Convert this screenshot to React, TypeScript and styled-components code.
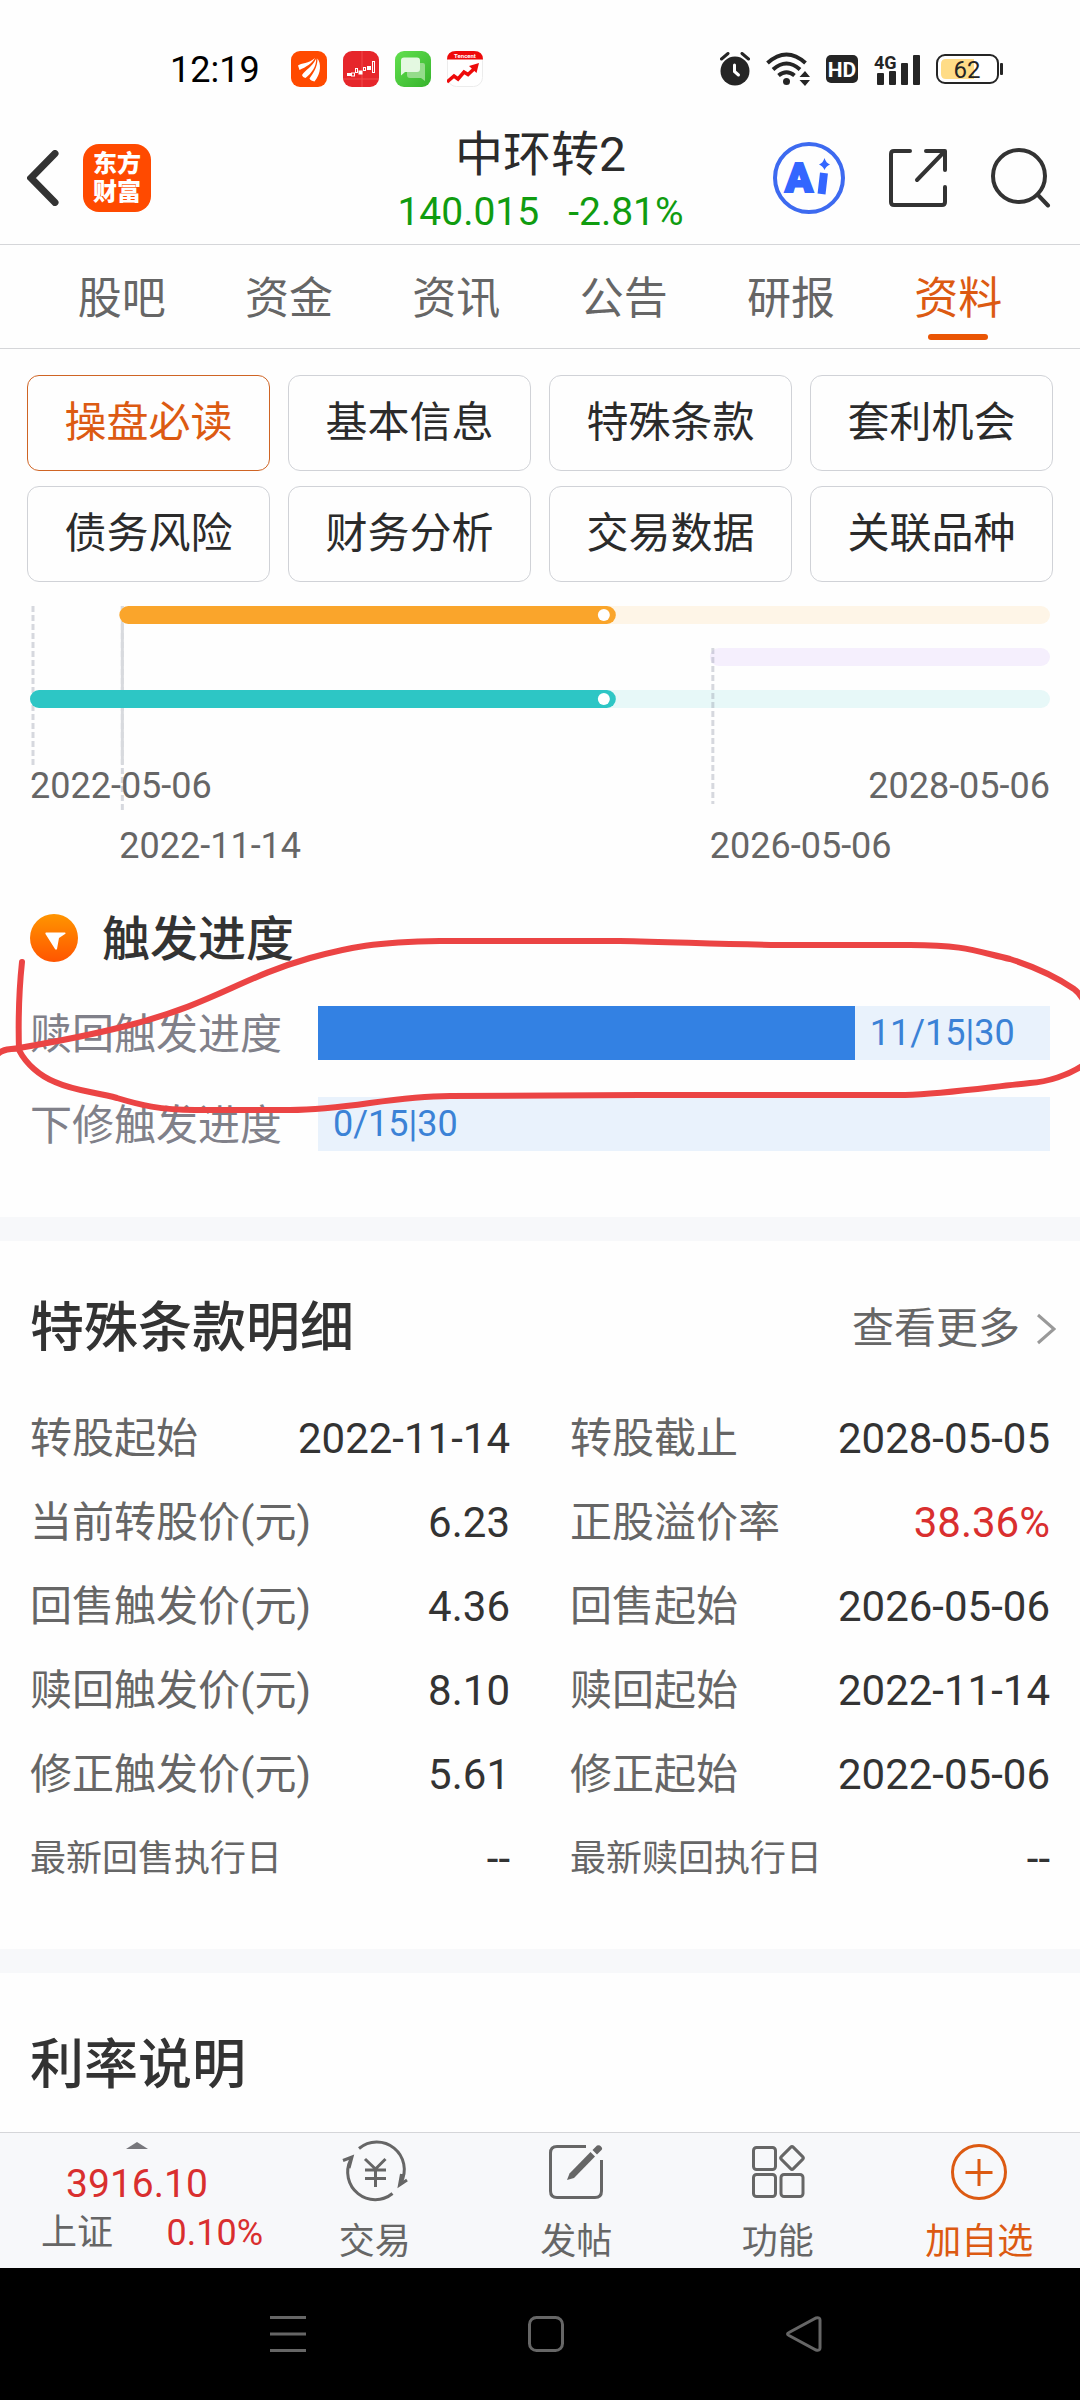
import React from "react";
import styled, { createGlobalStyle } from "styled-components";

const color = {
  ink: "#2b2b2b",
  heading: "#333333",
  muted: "#666666",
  accent: "#dc5a12",
  line: "#d5d6d9",
  band: "#f7f8fa",
  rise: "#d92f2f",
  fall: "#109c10",
  blue: "#3381e3",
};

const GlobalStyle = createGlobalStyle`
  * { box-sizing: border-box; }
  body { margin: 0; background: #fefefe; }
  body, button {
    font-family: Roboto, "Noto Sans CJK SC", "Noto Sans", sans-serif;
  }
  button {
    margin: 0;
    padding: 0;
    border: 0;
    background: none;
    color: inherit;
    cursor: pointer;
  }
  svg { display: block; flex: none; }
  h1, h2, h3, p, dl, dd { margin: 0; }
`;

const Page = styled.div`
  min-height: 100vh;
  display: flex;
  flex-direction: column;
  background: #fefefe;
  color: ${color.ink};
`;

/* ---------- status bar ---------- */

const StatusBar = styled.div`
  height: 100px;
  padding: 38px 77px 0 170px;
  display: flex;
  align-items: center;
  justify-content: space-between;
`;

const StatusGroup = styled.div`
  display: flex;
  align-items: center;
  gap: 16px;
`;

const Clock = styled.time`
  margin-right: 15px;
  padding-top: 2px;
  font-size: 36px;
  line-height: 42px;
  color: #000;
`;

/* ---------- title bar ---------- */

const TitleBar = styled.header`
  display: grid;
  grid-template-columns: 1fr auto 1fr;
  align-items: center;
  height: 145px;
  padding: 11px 29px 0 27px;
  border-bottom: 1px solid ${color.line};
`;

const TitleSide = styled.div<{ $end?: boolean }>`
  display: flex;
  align-items: center;
  justify-content: ${(p) => (p.$end ? "flex-end" : "flex-start")};
  gap: ${(p) => (p.$end ? 44 : 24)}px;
`;

const BrandButton = styled.button`
  width: 68px;
  height: 68px;
  border-radius: 16px;
  background: #ff4a00;
  color: #fff;
  font-size: 24px;
  line-height: 28px;
  font-weight: 900;
`;

const TitleText = styled.div`
  padding: 8px 0 0 3px;
  text-align: center;
`;

const BondName = styled.h1`
  font-size: 48px;
  line-height: 60px;
  font-weight: 400;
`;

const BondQuote = styled.p`
  display: flex;
  justify-content: center;
  gap: 29px;
  font-size: 39px;
  line-height: 54px;
  color: ${color.fall};
`;

/* ---------- tabs and chips ---------- */

const Tabs = styled.nav`
  display: flex;
  height: 104px;
  padding: 0 38px;
  border-bottom: 1px solid ${color.line};
`;

const Tab = styled.button<{ $active?: boolean }>`
  position: relative;
  flex: 1;
  padding-top: 5px;
  font-size: 44px;
  line-height: 60px;
  color: ${(p) => (p.$active ? color.accent : color.muted)};

  &::after {
    content: "";
    display: ${(p) => (p.$active ? "block" : "none")};
    position: absolute;
    left: 50%;
    bottom: 8px;
    width: 60px;
    height: 6px;
    margin-left: -30px;
    border-radius: 3px;
    background: #ea5504;
  }
`;

const Main = styled.main`
  flex: 1;
`;

const Chips = styled.div`
  display: grid;
  grid-template-columns: repeat(4, 1fr);
  gap: 15px 18px;
  padding: 26px 27px 0;
`;

const Chip = styled.button<{ $active?: boolean }>`
  height: 96px;
  border: 1px solid ${(p) => (p.$active ? "#cf6424" : "#d0d2d7")};
  border-radius: 12px;
  font-size: 42px;
  line-height: 60px;
  color: ${(p) => (p.$active ? color.accent : color.ink)};
`;

/* ---------- timeline ---------- */

const Timeline = styled.section`
  display: grid;
  margin: 24px 30px 0;
`;

const TimelineChart = styled.svg`
  grid-area: 1 / 1;
  width: 100%;
  height: 204px;
`;

const TimelineLabels = styled.div`
  grid-area: 1 / 1;
  display: grid;
  gap: 18px;
  padding-top: 159px;
  font-size: 36px;
  line-height: 42px;
  color: ${color.muted};
`;

const EndLabels = styled.div`
  display: flex;
  justify-content: space-between;
`;

const MiddleLabels = styled.div`
  display: grid;
`;

/* ---------- trigger progress ---------- */

const TriggerSection = styled.section`
  position: relative;
  padding: 47px 30px 66px;
`;

const TriggerHeading = styled.div`
  display: flex;
  align-items: center;
  gap: 24px;
  height: 48px;
  margin-bottom: 44px;
`;

const TriggerTitle = styled.h2`
  padding-top: 4px;
  font-size: 48px;
  line-height: 60px;
  font-weight: 500;
  color: ${color.heading};
`;

const TriggerRows = styled.div`
  display: grid;
  gap: 37px;
`;

const TriggerRow = styled.div`
  display: flex;
  align-items: center;
  gap: 36px;
  height: 54px;
`;

const TriggerLabel = styled.span`
  padding-top: 4px;
  font-size: 42px;
  line-height: 54px;
  color: #808089;
`;

const TriggerTrack = styled.div`
  flex: 1;
  display: flex;
  height: 54px;
  background: #e9f2fc;
`;

const TriggerFill = styled.div`
  background: ${color.blue};
`;

const TriggerValue = styled.span`
  padding-left: 15px;
  font-size: 36px;
  line-height: 54px;
  color: #3b82d6;
`;

const Annotation = styled.svg`
  position: absolute;
  left: 0;
  top: 0;
  width: 100%;
  height: 100%;
  pointer-events: none;
`;

/* ---------- detail sections ---------- */

const Band = styled.div`
  height: 24px;
  background: ${color.band};
`;

const Section = styled.section`
  padding: 58px 30px 48px;
`;

const RateSection = styled.section`
  padding: 63px 30px 36px;
`;

const SectionHead = styled.div`
  display: flex;
  align-items: center;
  justify-content: space-between;
`;

const SectionTitle = styled.h2`
  font-size: 54px;
  line-height: 60px;
  font-weight: 500;
  color: ${color.heading};
`;

const MoreButton = styled.button`
  display: flex;
  align-items: center;
  gap: 16px;
  margin-right: -6px;
  font-size: 42px;
  line-height: 60px;
  color: ${color.muted};
`;

const TermGrid = styled.dl`
  display: grid;
  grid-template-columns: 1fr 1fr;
  column-gap: 60px;
  margin-top: 38px;
`;

const TermRow = styled.div`
  display: flex;
  align-items: center;
  justify-content: space-between;
  height: 84px;
`;

const TermName = styled.dt<{ $small?: boolean }>`
  font-size: ${(p) => (p.$small ? 36 : 42)}px;
  line-height: 60px;
  color: ${color.muted};
`;

const TermValue = styled.dd<{ $rise?: boolean }>`
  font-size: 42px;
  line-height: 60px;
  color: ${(p) => (p.$rise ? color.rise : color.heading)};
`;

/* ---------- bottom bars ---------- */

const BottomBar = styled.footer`
  display: flex;
  height: 136px;
  border-top: 1px solid ${color.line};
  background: #f7f8fa;
`;

const IndexButton = styled.button`
  display: flex;
  flex-direction: column;
  align-items: center;
  width: 274px;
  padding-top: 9px;
  color: ${color.rise};
`;

const IndexValue = styled.span`
  margin-top: 13px;
  font-size: 39px;
  line-height: 44px;
`;

const IndexRow = styled.span`
  display: flex;
  justify-content: space-between;
  width: 100%;
  padding: 6px 11px 0 41px;
  font-size: 36px;
  line-height: 42px;
`;

const IndexName = styled.span`
  color: ${color.muted};
`;

const ActionButton = styled.button<{ $accent?: boolean }>`
  flex: 1;
  display: flex;
  flex-direction: column;
  align-items: center;
  gap: 17px;
  padding-top: 7px;
  font-size: 36px;
  line-height: 42px;
  color: ${(p) => (p.$accent ? color.accent : color.muted)};
`;

const SystemNav = styled.nav`
  display: flex;
  justify-content: center;
  align-items: center;
  gap: 222px;
  height: 132px;
  padding-left: 12px;
  background: #000;
`;

/* ---------- icons ---------- */

const FanAppIcon = () => (
  <svg width="36" height="36" viewBox="0 0 36 36">
    <rect width="36" height="36" rx="9" fill="#ff4a00" />
    <g fill="#fff">
      <path d="M7 14.5C10 12 18 12.5 24 7C21 12.500 15 16 8.500 19Z" />
      <path d="M11 24C15 18.500 21 16 25.200 7.500C25.500 15 21 22 14.500 27C12.500 26.500 11.500 25.500 11 24Z" />
      <path d="M18.500 27.500C22 22 26.500 17 26.500 7.500C30 12 30.500 22 23.500 30.500C21 30 19.500 29.500 18.500 27.500Z" />
    </g>
  </svg>
);

const CandleAppIcon = () => (
  <svg width="36" height="36" viewBox="0 0 36 36">
    <rect width="36" height="36" rx="9" fill="#e6262b" />
    <path d="M19 0V36M0 28H36" stroke="#f04a4d" />
    <g stroke="#fff" fill="none">
      <rect x="4.500" y="22.500" width="3" height="2" fill="#fff" />
      <rect x="8.500" y="22" width="3" height="3" />
      <rect x="12.500" y="17.500" width="2" height="4" />
      <rect x="16" y="20" width="3" height="3" fill="#fff" />
      <rect x="20.500" y="16.500" width="2" height="3" />
      <rect x="24.500" y="15.500" width="3" height="3" fill="#fff" />
      <rect x="29.500" y="10.500" width="2" height="11" />
    </g>
  </svg>
);

const ChatAppIcon = () => (
  <svg width="36" height="36" viewBox="0 0 36 36">
    <defs>
      <linearGradient id="chat-bg" x1="0" y1="0" x2="1" y2="1">
        <stop offset="0" stopColor="#62e04f" />
        <stop offset="1" stopColor="#36b32c" />
      </linearGradient>
    </defs>
    <rect width="36" height="36" rx="9" fill="url(#chat-bg)" />
    <path d="M15 12H28Q30 12 30 14V30L26 27H15Q12 27 12 24V15Q12 12 15 12Z" fill="#95dc8b" />
    <path d="M9 6.500H22Q25 6.500 25 9.500V18Q25 21 22 21H10L6 24.500V9.500Q6 6.500 9 6.500Z" fill="#e4f8e1" />
  </svg>
);

const StockAppIcon = () => (
  <svg width="36" height="36" viewBox="0 0 36 36">
    <rect x="0.500" y="0.500" width="35" height="35" rx="9" fill="#fff" stroke="#ececec" />
    <path d="M0 8.500Q0 0 9 0H27Q36 0 36 8.500Z" fill="#ee0a0a" />
    <text x="18" y="6.500" fontSize="6" fontWeight="700" fill="#fff" textAnchor="middle" fontFamily="Roboto, sans-serif">
      Tencent
    </text>
    <path d="M0 31L7 25L11 28L17 21L21 23.500L28 17" fill="none" stroke="#ee0a0a" strokeWidth="3.500" />
    <path d="M22 15L32 12L29.500 22Z" fill="#ee0a0a" />
  </svg>
);

const AlarmIcon = () => (
  <svg width="30" height="34" viewBox="0 0 30 34">
    <circle cx="15" cy="19" r="14.500" fill="#252525" />
    <path d="M1.500 7L8 1.500M28.500 7L22 1.500" stroke="#252525" strokeWidth="3" strokeLinecap="round" />
    <path d="M14.500 13V19.500L18.500 23" stroke="#fff" strokeWidth="3" fill="none" strokeLinecap="round" />
  </svg>
);

const WifiIcon = () => (
  <svg width="44" height="34" viewBox="0 0 44 34">
    <g fill="none" stroke="#252525" strokeWidth="4">
      <path d="M1.500 11Q20.500 -6 39.500 11" />
      <path d="M7 17.500Q20.500 5.500 34 17.500" />
      <path d="M12.500 23.500Q20.500 17 28.500 23.500" />
    </g>
    <circle cx="20.500" cy="29.500" r="3.500" fill="#252525" />
    <path d="M33.500 25L39 19L44 25ZM33.500 28L39 34L44 28Z" fill="#252525" />
  </svg>
);

const HdIcon = () => (
  <svg width="32" height="28" viewBox="0 0 32 28">
    <rect width="32" height="28" rx="5" fill="#252525" />
    <text x="16" y="22" fontSize="21" fontWeight="700" fill="#fff" textAnchor="middle" fontFamily="Roboto, sans-serif">
      HD
    </text>
  </svg>
);

const SignalIcon = () => (
  <svg width="46" height="38" viewBox="0 -4 46 38" overflow="visible">
    <text x="0" y="15" fontSize="18" fontWeight="700" fill="#252525" fontFamily="Roboto, sans-serif">
      4G
    </text>
    <g fill="#252525">
      <rect x="3" y="19" width="7" height="12" rx="1" />
      <rect x="15" y="17" width="7" height="14" rx="1" />
      <rect x="27" y="9" width="7" height="22" rx="1" />
      <rect x="39" y="1" width="7" height="30" rx="1" />
    </g>
  </svg>
);

const BatteryIcon = () => (
  <svg width="67" height="30" viewBox="0 0 67 30">
    <rect x="1" y="1" width="61" height="28" rx="8" fill="#fff" stroke="#252525" strokeWidth="2" />
    <path d="M10 5H38V25H10Q5 25 5 20V10Q5 5 10 5Z" fill="#ffdc87" />
    <rect x="64" y="9" width="3" height="12" rx="1" fill="#252525" />
    <text x="31" y="24" fontSize="24" fill="#252525" textAnchor="middle" fontFamily="Roboto, sans-serif">
      62
    </text>
  </svg>
);

const BackIcon = () => (
  <svg width="32" height="56" viewBox="0 0 32 56">
    <path d="M28 3.500L4 28L28 52.500" fill="none" stroke="#333" strokeWidth="7" strokeLinecap="round" />
  </svg>
);

const AiIcon = () => (
  <svg width="72" height="72" viewBox="0 0 72 72">
    <circle cx="36" cy="36" r="34" fill="none" stroke="#3d6af0" strokeWidth="4" />
    <text x="12" y="50" fontSize="41" fontWeight="900" fill="#3366ff" stroke="#3366ff" strokeWidth="2" fontFamily="Roboto, sans-serif">
      A
    </text>
    <path d="M50.500 35L49 48" stroke="#3366ff" strokeWidth="8" strokeLinecap="square" />
    <path d="M51.500 16Q53 21 57 22.500Q53 24 51.500 28Q50 24 46 22.500Q50 21 51.500 16Z" fill="#3366ff" />
  </svg>
);

const ShareIcon = () => (
  <svg width="58" height="58" viewBox="0 0 58 58">
    <g fill="none" stroke="#333" strokeWidth="4" strokeLinecap="round" strokeLinejoin="round">
      <path d="M21 2H5Q2 2 2 5V53Q2 56 5 56H53Q56 56 56 53V38" />
      <path d="M37 2H56V21M55 3L28 31" />
    </g>
  </svg>
);

const SearchIcon = () => (
  <svg width="60" height="60" viewBox="0 0 60 60">
    <g fill="none" stroke="#333" strokeWidth="4" strokeLinecap="round">
      <circle cx="28" cy="28" r="26" />
      <path d="M46.500 46.500L57 57.500" />
    </g>
  </svg>
);

const TriggerIcon = () => (
  <svg width="48" height="48" viewBox="0 0 48 48">
    <defs>
      <linearGradient id="trigger-bg" x1="0" y1="0" x2="0" y2="1">
        <stop offset="0" stopColor="#ff9500" />
        <stop offset="1" stopColor="#ff5500" />
      </linearGradient>
    </defs>
    <circle cx="24" cy="24" r="24" fill="url(#trigger-bg)" />
    <path d="M16 18.500H35Q36.500 19 35 20L29 24L27 35Q26 36.500 25 35L15.500 20Q15 18.500 16 18.500Z" fill="#fff" />
  </svg>
);

const MoreIcon = () => (
  <svg width="20" height="32" viewBox="0 0 20 32">
    <path d="M2 2L18 16L2 30" fill="none" stroke="#999" strokeWidth="3" />
  </svg>
);

const UpTriangle = () => (
  <svg width="22" height="7" viewBox="0 0 22 7">
    <path d="M0 7L11 0L22 7Z" fill="#77777c" />
  </svg>
);

const TradeIcon = () => (
  <svg width="66" height="64" viewBox="0 0 66 64">
    <g fill="none" stroke="#666" strokeWidth="3">
      <path d="M17 8.500A27.500 27.500 0 0 1 59 42.500M65 40L57.500 45L59.500 34" />
      <path d="M50.500 53.500A27.500 27.500 0 0 1 8.500 20M1 20.500L10 17L7 28" />
      <path d="M23 19L33.500 29L43.500 19M23 30H44M23 38.500H44M33.500 29V47" />
    </g>
  </svg>
);

const PostIcon = () => (
  <svg width="56" height="64" viewBox="0 0 56 64">
    <path d="M38 6.500H9Q2.500 6.500 2.500 13V51Q2.500 57.500 9 57.500H47Q53.500 57.500 53.500 51V20" fill="none" stroke="#666" strokeWidth="3" />
    <path d="M19 40L21.500 33.500L42.500 12L47 16.500L26 38Z" fill="#666" />
    <path d="M44.500 10L49 5.500Q51.500 4.500 53 6.500Q55 8.500 53.500 10L49 14.500Z" fill="#666" />
  </svg>
);

const FeatureIcon = () => (
  <svg width="54" height="64" viewBox="0 0 54 64">
    <g fill="none" stroke="#666" strokeWidth="3">
      <rect x="2.500" y="7.500" width="22" height="22" rx="3" />
      <rect x="2.500" y="34.500" width="22" height="22" rx="3" />
      <rect x="30" y="34.500" width="22" height="22" rx="3" />
      <rect x="32.500" y="9.500" width="17" height="17" rx="2" transform="rotate(45 41 18)" />
    </g>
  </svg>
);

const AddIcon = () => (
  <svg width="58" height="64" viewBox="0 0 58 64">
    <g fill="none" stroke={color.accent} strokeWidth="3">
      <circle cx="29" cy="32" r="26.500" />
      <path d="M29 19V46M15.500 32.500H42.500" />
    </g>
  </svg>
);

/* ---------- data ---------- */

const tabs = ["股吧", "资金", "资讯", "公告", "研报", "资料"];

const chips = [
  "操盘必读",
  "基本信息",
  "特殊条款",
  "套利机会",
  "债务风险",
  "财务分析",
  "交易数据",
  "关联品种",
];

const term = { start: "2022-05-06", convert: "2022-11-14", putBack: "2026-05-06", end: "2028-05-06" };
const today = "2025-10-16";

const share = (day: string) =>
  ((Date.parse(day) - Date.parse(term.start)) / (Date.parse(term.end) - Date.parse(term.start))) * 100;

const spans = [
  { from: term.convert, y: 0, tint: "#fef5e7", fill: "#faa52b" },
  { from: term.putBack, y: 42, tint: "#f5effd", fill: "" },
  { from: term.start, y: 84, tint: "#e7f8f8", fill: "#2dc6c5" },
];

const triggers = [
  { label: "赎回触发进度", done: 11, need: 15, window: 30 },
  { label: "下修触发进度", done: 0, need: 15, window: 30 },
];

const terms = [
  { name: "转股起始", value: "2022-11-14" },
  { name: "转股截止", value: "2028-05-05" },
  { name: "当前转股价(元)", value: "6.23" },
  { name: "正股溢价率", value: "38.36%", rise: true },
  { name: "回售触发价(元)", value: "4.36" },
  { name: "回售起始", value: "2026-05-06" },
  { name: "赎回触发价(元)", value: "8.10" },
  { name: "赎回起始", value: "2022-11-14" },
  { name: "修正触发价(元)", value: "5.61" },
  { name: "修正起始", value: "2022-05-06" },
  { name: "最新回售执行日", value: "--", small: true },
  { name: "最新赎回执行日", value: "--", small: true },
];

/* ---------- parts ---------- */

const TermTimeline = () => {
  const now = share(today);
  const guides = [
    { at: share(term.start), top: 0, bottom: 162, under: true },
    { at: share(term.convert), top: 0, bottom: 204, under: true },
    { at: share(term.putBack), top: 42, bottom: 198, under: false },
  ];
  const guideLine = (g: (typeof guides)[number]) => (
    <svg key={g.at} x={`${g.at}%`} overflow="visible">
      <line x1="3" x2="3" y1={g.top} y2={g.bottom} stroke="#8a8fa0" strokeOpacity="0.34" strokeWidth="3" strokeDasharray="6 3" />
    </svg>
  );
  return (
    <Timeline>
      <TimelineChart aria-hidden="true">
        {guides.filter((g) => g.under).map(guideLine)}
        <svg x={`${share(term.convert)}%`} overflow="visible">
          <line x1="3" x2="3" y1="0" y2="158" stroke="#d8dade" strokeWidth="3" />
        </svg>
        {spans.map((s) => (
          <g key={s.y}>
            <rect x={`${share(s.from)}%`} y={s.y} width={`${100 - share(s.from)}%`} height="18" rx="9" fill={s.tint} />
            {s.fill && (
              <>
                <rect x={`${share(s.from)}%`} y={s.y} width={`${now - share(s.from)}%`} height="18" rx="9" fill={s.fill} />
                <svg x={`${now}%`} overflow="visible">
                  <circle cx="-12" cy={s.y + 9} r="6" fill="#fff" />
                </svg>
              </>
            )}
          </g>
        ))}
        {guides.filter((g) => !g.under).map(guideLine)}
      </TimelineChart>
      <TimelineLabels>
        <EndLabels>
          <span>{term.start}</span>
          <span>{term.end}</span>
        </EndLabels>
        <MiddleLabels
          style={{
            gridTemplateColumns: `${share(term.convert)}% ${share(term.putBack) - share(term.convert)}% 1fr`,
          }}
        >
          <span />
          <span>{term.convert}</span>
          <span>{term.putBack}</span>
        </MiddleLabels>
      </TimelineLabels>
    </Timeline>
  );
};

const TriggerProgress = () => (
  <TriggerSection>
    <TriggerHeading>
      <TriggerIcon />
      <TriggerTitle>触发进度</TriggerTitle>
    </TriggerHeading>
    <TriggerRows>
      {triggers.map((t) => (
        <TriggerRow key={t.label}>
          <TriggerLabel>{t.label}</TriggerLabel>
          <TriggerTrack>
            <TriggerFill style={{ width: `${(t.done / t.need) * 100}%` }} />
            <TriggerValue>{`${t.done}/${t.need}|${t.window}`}</TriggerValue>
          </TriggerTrack>
        </TriggerRow>
      ))}
    </TriggerRows>
    <Annotation viewBox="0 867 1080 350" preserveAspectRatio="none" aria-hidden="true">
      <g fill="none" stroke="#eb4444" strokeWidth="6" strokeLinecap="round" strokeLinejoin="round">
        <path d="M22 962C19 990 18 1015 19 1050C26 1064 40 1076 55 1082C75 1091 95 1092 117 1098C140 1105 160 1110 195 1110H290C350 1110 390 1096 450 1096C500 1096 560 1095 640 1095H905C945 1094 990 1087 1030 1083C1048 1082 1068 1075 1082 1066" />
        <path d="M-2 1054C4 1048 10 1050 19 1048C60 1041 95 1034 130 1025C215 1003 240 978 310 958C350 947 375 942 440 941H620C680 942 730 945 795 945H910C965 945 975 951 1010 959C1035 967 1055 976 1074 989Q1079 993 1082 998" />
      </g>
    </Annotation>
  </TriggerSection>
);

export default function App() {
  return (
    <>
      <GlobalStyle />
      <Page>
        <StatusBar>
          <StatusGroup>
            <Clock>12:19</Clock>
            <FanAppIcon />
            <CandleAppIcon />
            <ChatAppIcon />
            <StockAppIcon />
          </StatusGroup>
          <StatusGroup>
            <AlarmIcon />
            <WifiIcon />
            <HdIcon />
            <SignalIcon />
            <BatteryIcon />
          </StatusGroup>
        </StatusBar>

        <TitleBar>
          <TitleSide>
            <button aria-label="返回">
              <BackIcon />
            </button>
            <BrandButton>
              东方
              <br />
              财富
            </BrandButton>
          </TitleSide>
          <TitleText>
            <BondName>中环转2</BondName>
            <BondQuote>
              <span>140.015</span>
              <span>-2.81%</span>
            </BondQuote>
          </TitleText>
          <TitleSide $end>
            <button aria-label="Ai">
              <AiIcon />
            </button>
            <button aria-label="分享">
              <ShareIcon />
            </button>
            <button aria-label="搜索">
              <SearchIcon />
            </button>
          </TitleSide>
        </TitleBar>

        <Tabs>
          {tabs.map((t) => (
            <Tab key={t} $active={t === "资料"}>
              {t}
            </Tab>
          ))}
        </Tabs>

        <Main>
          <Chips>
            {chips.map((c) => (
              <Chip key={c} $active={c === "操盘必读"}>
                {c}
              </Chip>
            ))}
          </Chips>
          <TermTimeline />
          <TriggerProgress />
          <Band />
          <Section>
            <SectionHead>
              <SectionTitle>特殊条款明细</SectionTitle>
              <MoreButton>
                查看更多
                <MoreIcon />
              </MoreButton>
            </SectionHead>
            <TermGrid>
              {terms.map((t) => (
                <TermRow key={t.name}>
                  <TermName $small={t.small}>{t.name}</TermName>
                  <TermValue $rise={t.rise}>{t.value}</TermValue>
                </TermRow>
              ))}
            </TermGrid>
          </Section>
          <Band />
          <RateSection>
            <SectionTitle>利率说明</SectionTitle>
          </RateSection>
        </Main>

        <BottomBar>
          <IndexButton>
            <UpTriangle />
            <IndexValue>3916.10</IndexValue>
            <IndexRow>
              <IndexName>上证</IndexName>
              <span>0.10%</span>
            </IndexRow>
          </IndexButton>
          <ActionButton>
            <TradeIcon />
            交易
          </ActionButton>
          <ActionButton>
            <PostIcon />
            发帖
          </ActionButton>
          <ActionButton>
            <FeatureIcon />
            功能
          </ActionButton>
          <ActionButton $accent>
            <AddIcon />
            加自选
          </ActionButton>
        </BottomBar>

        <SystemNav>
          <button aria-label="菜单">
            <svg width="36" height="36" viewBox="0 0 36 36">
              <path d="M0 1.500H36M0 18H36M0 34.500H36" stroke="#666" strokeWidth="3" />
            </svg>
          </button>
          <button aria-label="主页">
            <svg width="36" height="36" viewBox="0 0 36 36">
              <rect x="1.500" y="1.500" width="33" height="33" rx="7" fill="none" stroke="#666" strokeWidth="3" />
            </svg>
          </button>
          <button aria-label="后退">
            <svg width="36" height="36" viewBox="0 0 36 36">
              <path d="M3 16.500L30 2Q34 1 34 4V32Q34 35 30 34L3 19.500Q0 18 3 16.500Z" fill="none" stroke="#666" strokeWidth="3" />
            </svg>
          </button>
        </SystemNav>
      </Page>
    </>
  );
}
